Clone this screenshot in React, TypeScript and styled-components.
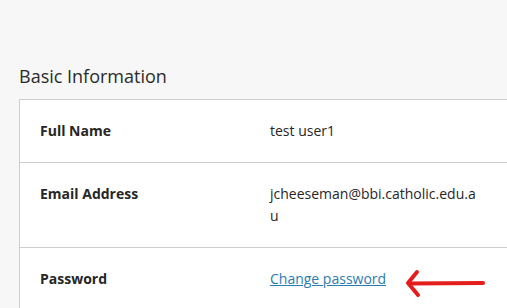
import styled, { createGlobalStyle } from "styled-components"

const GlobalStyle = createGlobalStyle`
    html, body {
        margin: 0;
        padding: 0;
        background-color: #f7f7f7;
        font-family: "Open Sans", "Noto Sans", sans-serif;
        color: #262626;
        overflow: hidden;
    }
`

const rows = [
    { label: "Full Name", value: "test user1" },
    { label: "Email Address", value: "jcheeseman@bbi.catholic.edu.au" },
]

export default function App() {
    return (
        <Page>
            <GlobalStyle />
            <SectionTitle>Basic Information</SectionTitle>
            <Card>
                {rows.map(row => (
                    <Row key={row.label}>
                        <Label>{row.label}</Label>
                        <Value>{row.value}</Value>
                    </Row>
                ))}
                <Row>
                    <Label>Password</Label>
                    <Value>
                        <Link href="#">Change password</Link>
                    </Value>
                    <Arrow width="84" height="30" viewBox="0 0 84 30">
                        <path d="M80 15 L6 15.5" />
                        <path d="M14 4 L5 15 L15 27" />
                    </Arrow>
                </Row>
            </Card>
        </Page>
    )
}

const Page = styled.div`
    width: 507px;
    height: 308px;
    padding: 64px 0 0 19px;
    box-sizing: border-box;
    overflow: hidden;
`

const SectionTitle = styled.h2`
    margin: 0 0 11px;
    font-size: 18px;
    font-weight: 400;
    line-height: 24px;
    color: #2b2b2b;
`

const Card = styled.div`
    width: 520px;
    background-color: #fff;
    border: 1px solid #cdcdcd;
    border-right: none;
`

const Row = styled.div`
    display: flex;
    align-items: flex-start;
    padding: 20px 0 20px 20px;
    border-bottom: 1px solid #cdcdcd;
    font-size: 14px;
    line-height: 22px;

    &:last-child {
        border-bottom: none;
    }
`

const Label = styled.div`
    width: 230px;
    font-weight: 700;
    color: #262626;
`

const Value = styled.div`
    width: 212px;
    word-break: break-all;
    color: #262626;
`

const Link = styled.a`
    color: #2a7bb0;
    text-decoration: underline;
`

const Arrow = styled.svg`
    flex-shrink: 0;
    margin: 0 0 0 -79px;
    fill: none;
    stroke: #e41d1d;
    stroke-width: 4;
    stroke-linecap: round;
    stroke-linejoin: round;
`
